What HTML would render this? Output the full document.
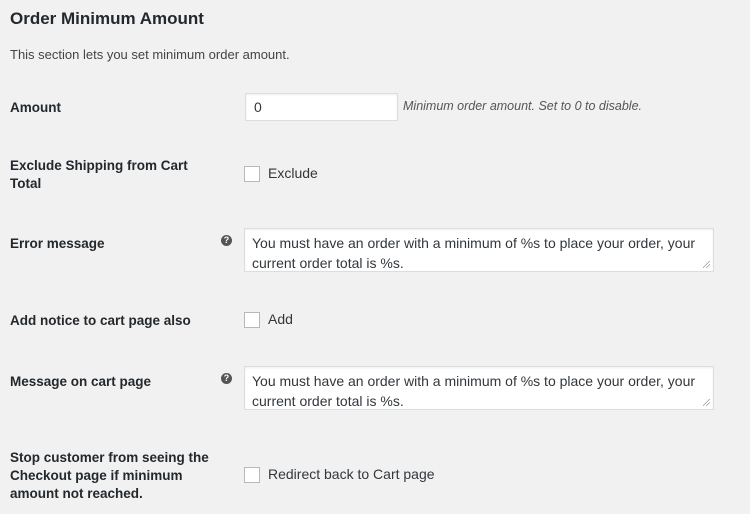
<!DOCTYPE html>
<html><head><style>
body{margin:0;width:750px;height:514px;background:#f1f1f1;font-family:"Liberation Sans",sans-serif;color:#23282d;position:relative;overflow:hidden}
.a{position:absolute}
h2{position:absolute;left:10px;top:9px;margin:0;font-size:17px;font-weight:600}
.lbl{position:absolute;left:10px;font-size:13.5px;font-weight:600;line-height:18px;width:190px}
.inp{position:absolute;background:#fff;border:1px solid #ddd;box-shadow:inset 0 1px 2px rgba(0,0,0,.07);font-size:14px;color:#32373c;box-sizing:border-box}
.cb{position:absolute;left:244px;width:16px;height:16px;background:#fff;border:1px solid #b4b9be;box-sizing:border-box}
.ct{position:absolute;left:268px;font-size:14px;color:#32373c}
.q{position:absolute;left:221px;width:11px;height:11px;border-radius:50%;background:#555;color:#fff;font-size:9px;font-weight:bold;text-align:center;line-height:11px}
.rs{position:absolute;right:3px;bottom:3px;width:7px;height:7px;background:linear-gradient(135deg,transparent 45%,#999 45%,#999 52%,transparent 52%,transparent 70%,#999 70%,#999 77%,transparent 77%)}
</style></head><body>
<h2>Order Minimum Amount</h2>
<div class="a" style="left:10px;top:47px;font-size:13px;color:#444">This section lets you set minimum order amount.</div>

<div class="lbl" style="top:99px">Amount</div>
<div class="inp" style="left:245px;top:93px;width:153px;height:28px;padding:5px 8px">0</div>
<div class="a" style="left:403px;top:99px;font-size:12.5px;font-style:italic;color:#555">Minimum order amount. Set to 0 to disable.</div>

<div class="lbl" style="top:157px">Exclude Shipping from Cart<br>Total</div>
<div class="cb" style="top:166px"></div>
<div class="ct" style="top:165px">Exclude</div>

<div class="lbl" style="top:235px">Error message</div>
<div class="q" style="top:235px">?</div>
<div class="inp" style="left:244px;top:228px;width:470px;height:44px;padding:4px 7px;line-height:20px">You must have an order with a minimum of %s to place your order, your current order total is %s.<div class="rs"></div></div>

<div class="lbl" style="top:312px">Add notice to cart page also</div>
<div class="cb" style="top:312px"></div>
<div class="ct" style="top:311px">Add</div>

<div class="lbl" style="top:373px">Message on cart page</div>
<div class="q" style="top:373px">?</div>
<div class="inp" style="left:244px;top:366px;width:470px;height:44px;padding:4px 7px;line-height:20px">You must have an order with a minimum of %s to place your order, your current order total is %s.<div class="rs"></div></div>

<div class="lbl" style="top:449px;width:215px">Stop customer from seeing the Checkout page if minimum amount not reached.</div>
<div class="cb" style="top:467px"></div>
<div class="ct" style="top:466px">Redirect back to Cart page</div>
</body></html>
